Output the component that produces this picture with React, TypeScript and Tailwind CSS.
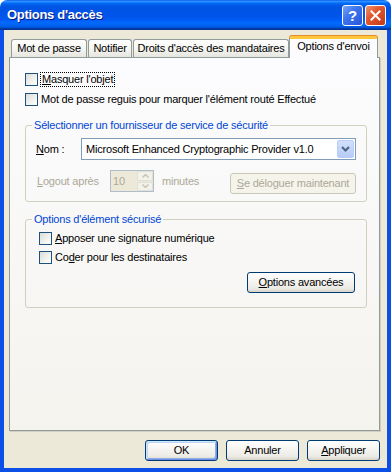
import type { ReactNode } from "react"

function CheckBox() {
  return (
    <span className="w-[13px] h-[13px] shrink-0 border border-[#1C5180] bg-[linear-gradient(135deg,#DCDCD7_0%,#F4F4F1_65%,#FFFFFF_100%)]" />
  )
}

function XPButton({
  children,
  className = "",
  isDefault = false,
  disabled = false,
}: {
  children: ReactNode
  className?: string
  isDefault?: boolean
  disabled?: boolean
}) {
  if (disabled) {
    return (
      <div
        className={`h-[21px] rounded-[3px] border border-[#C9C7BA] bg-[#F5F4EA] text-[#ACA899] flex items-center justify-center ${className}`}
      >
        {children}
      </div>
    )
  }
  return (
    <div
      className={`h-[21px] rounded-[3px] border border-[#003C74] bg-[linear-gradient(to_bottom,#FFFFFF_0%,#F5F4F0_45%,#ECEBE5_80%,#D8D4CA_100%)] flex items-center justify-center ${
        isDefault
          ? "shadow-[inset_1px_1px_0_#CEE7FF,inset_-1px_-1px_0_#6F8FE6,inset_2px_2px_0_#BCD4F6,inset_-2px_-2px_0_#90AEE6]"
          : ""
      } ${className}`}
    >
      {children}
    </div>
  )
}

function Tab({ label, width, active = false }: { label: string; width: string; active?: boolean }) {
  if (active) {
    return (
      <div
        className={`${width} h-[22px] -mb-px relative z-10 flex justify-center rounded-t-[3px] border-x border-[#919B9C] border-t-[3px] border-t-[#FFC73C] bg-[#FCFCFE] shadow-[0_-1px_0_#E68B2C]`}
      >
        <span className="leading-[13px] pt-[1px]">{label}</span>
      </div>
    )
  }
  return (
    <div
      className={`${width} h-[18px] flex items-center justify-center rounded-t-[3px] border-x border-t border-[#919B9C] bg-[linear-gradient(to_bottom,#FFFFFF,#F3F3EF_60%,#E6E5DE)]`}
    >
      {label}
    </div>
  )
}

export default function App() {
  return (
    <div className="w-[391px] h-[472px] flex flex-col font-['Liberation_Sans',Arial,sans-serif] text-[11px] tracking-[-0.2px] text-black">
      {/* Title bar */}
      <div className="h-[30px] shrink-0 rounded-t-[7px] flex items-center pl-[7px] pr-[5px] bg-[linear-gradient(to_bottom,#0058EE_0%,#3593FF_4%,#288EFF_6%,#127DFF_8%,#036FFC_10%,#0262EE_14%,#0057E5_20%,#0054E3_24%,#0055EB_56%,#005BF5_66%,#026AFE_76%,#0062EF_86%,#0052D6_92%,#0040AB_94%,#003092_100%)]">
        <span className="text-white font-bold text-[13px] tracking-[-0.3px] [text-shadow:1px_1px_0_#0A1883]">
          Options d'accès
        </span>
        <div className="flex-1" />
        <div className="flex gap-[2px]">
          <div className="w-[21px] h-[21px] rounded-[3px] border border-white bg-[linear-gradient(135deg,#7CA3F7_0%,#3F74EE_40%,#2457D8_100%)] flex items-center justify-center text-white font-bold text-[15px] leading-none">
            ?
          </div>
          <div className="w-[21px] h-[21px] rounded-[3px] border border-white bg-[linear-gradient(135deg,#F1926E_0%,#E0592F_40%,#C13A17_100%)] flex items-center justify-center">
            <svg width="11" height="11" viewBox="0 0 11 11">
              <path d="M1.5 1.5 L9.5 9.5 M9.5 1.5 L1.5 9.5" stroke="white" strokeWidth="2" strokeLinecap="square" />
            </svg>
          </div>
        </div>
      </div>

      {/* Window body */}
      <div className="flex-1 flex flex-col bg-[#ECE9D8] border-x-4 border-b-4 border-[#0B4FE6]">
        {/* Tabs */}
        <div className="h-[27px] shrink-0 flex items-end pl-[7px]">
          <Tab label="Mot de passe" width="w-[76px]" />
          <div className="w-px" />
          <Tab label="Notifier" width="w-[44px]" />
          <div className="w-px" />
          <Tab label="Droits d'accès des mandataires" width="w-[156px]" />
          <Tab label="Options d'envoi" width="w-[89px]" active />
        </div>

        {/* Tab panel */}
        <div className="ml-[5px] w-[371px] h-[374px] shrink-0 border border-[#919B9C] shadow-[1px_1px_0_#D0CEBF] bg-[linear-gradient(to_bottom,#FCFCFE,#F4F3EE)] flex flex-col pt-[14px] pl-[15px] pr-[12px]">
          <div className="flex items-center h-[15px]">
            <CheckBox />
            <span className="ml-[2px] border border-dotted border-black px-[1px] leading-[13px]">
              <u>M</u>asquer l'objet
            </span>
          </div>
          <div className="flex items-center h-[13px] mt-[6px]">
            <CheckBox />
            <span className="ml-[3px] leading-[13px]">Mot de passe reguis pour marquer l'élément routé Effectué</span>
          </div>

          <fieldset className="mt-[13px] border border-[#D0D0BF] rounded-[3px] pb-[7px]">
            <legend className="ml-[6px] px-[2px] leading-[13px] text-[#0046D5]">
              Sélectionner un fournisseur de service de sécurité
            </legend>
            <div className="flex items-center mt-[6px] px-[10px]">
              <span className="w-[45px] shrink-0">
                <u>N</u>om :
              </span>
              <div className="flex-1 h-[22px] border border-[#7F9DB9] bg-white flex items-center pl-[4px] pr-px">
                <span className="flex-1">Microsoft Enhanced Cryptographic Provider v1.0</span>
                <div className="w-[17px] h-[18px] rounded-[2px] border border-[#B9CDF7] bg-[linear-gradient(to_bottom,#D2E0FC,#B6CBF7)] flex items-center justify-center">
                  <svg width="9" height="6" viewBox="0 0 9 6">
                    <path d="M1 1 L4.5 4.5 L8 1" stroke="#4D6185" strokeWidth="2" fill="none" />
                  </svg>
                </div>
              </div>
            </div>
            <div className="flex items-start mt-[10px] pl-[11px] pr-[10px] text-[#ACA899]">
              <span className="w-[73px] shrink-0 leading-[22px]">
                <u>L</u>ogout après
              </span>
              <div className="w-[44px] h-[22px] border border-[#AFBCCB] bg-[#ECE9D8] flex items-center pl-[2px]">
                <span className="flex-1">10</span>
                <div className="w-[16px] h-[20px] flex flex-col gap-px">
                  <div className="flex-1 rounded-[2px] bg-[#F2F1EA] border border-[#E2E0D6] flex items-center justify-center">
                    <svg width="7" height="4" viewBox="0 0 7 4">
                      <path d="M0.5 3.5 L3.5 0.5 L6.5 3.5" stroke="#C9C7BA" strokeWidth="1.5" fill="none" />
                    </svg>
                  </div>
                  <div className="flex-1 rounded-[2px] bg-[#F2F1EA] border border-[#E2E0D6] flex items-center justify-center">
                    <svg width="7" height="4" viewBox="0 0 7 4">
                      <path d="M0.5 0.5 L3.5 3.5 L6.5 0.5" stroke="#C9C7BA" strokeWidth="1.5" fill="none" />
                    </svg>
                  </div>
                </div>
              </div>
              <span className="ml-[8px] leading-[22px]">minutes</span>
              <XPButton disabled className="ml-auto mt-[3px] w-[126px]">
                <span>
                  <u>S</u>e déloguer maintenant
                </span>
              </XPButton>
            </div>
          </fieldset>

          <fieldset className="mt-[11px] border border-[#D0D0BF] rounded-[3px] pb-[14px] flex flex-col">
            <legend className="ml-[6px] px-[2px] leading-[13px] text-[#0046D5]">Options d'élément sécurisé</legend>
            <div className="flex items-center h-[13px] mt-[6px] pl-[13px]">
              <CheckBox />
              <span className="ml-[3px] leading-[13px]">
                <u>A</u>pposer une signature numérique
              </span>
            </div>
            <div className="flex items-center h-[13px] mt-[6px] pl-[13px]">
              <CheckBox />
              <span className="ml-[3px] leading-[13px]">
                Co<u>d</u>er pour les destinataires
              </span>
            </div>
            <div className="flex justify-end mt-[8px] pr-[11px]">
              <XPButton className="w-[108px]">
                <span>
                  <u>O</u>ptions avancées
                </span>
              </XPButton>
            </div>
          </fieldset>
        </div>

        {/* Dialog buttons */}
        <div className="flex justify-end gap-[8px] mt-[9px] pr-[7px]">
          <XPButton isDefault className="w-[73px]">
            OK
          </XPButton>
          <XPButton className="w-[73px]">Annuler</XPButton>
          <XPButton className="w-[73px]">
            <span>
              <u>A</u>ppliquer
            </span>
          </XPButton>
        </div>
      </div>
    </div>
  )
}
